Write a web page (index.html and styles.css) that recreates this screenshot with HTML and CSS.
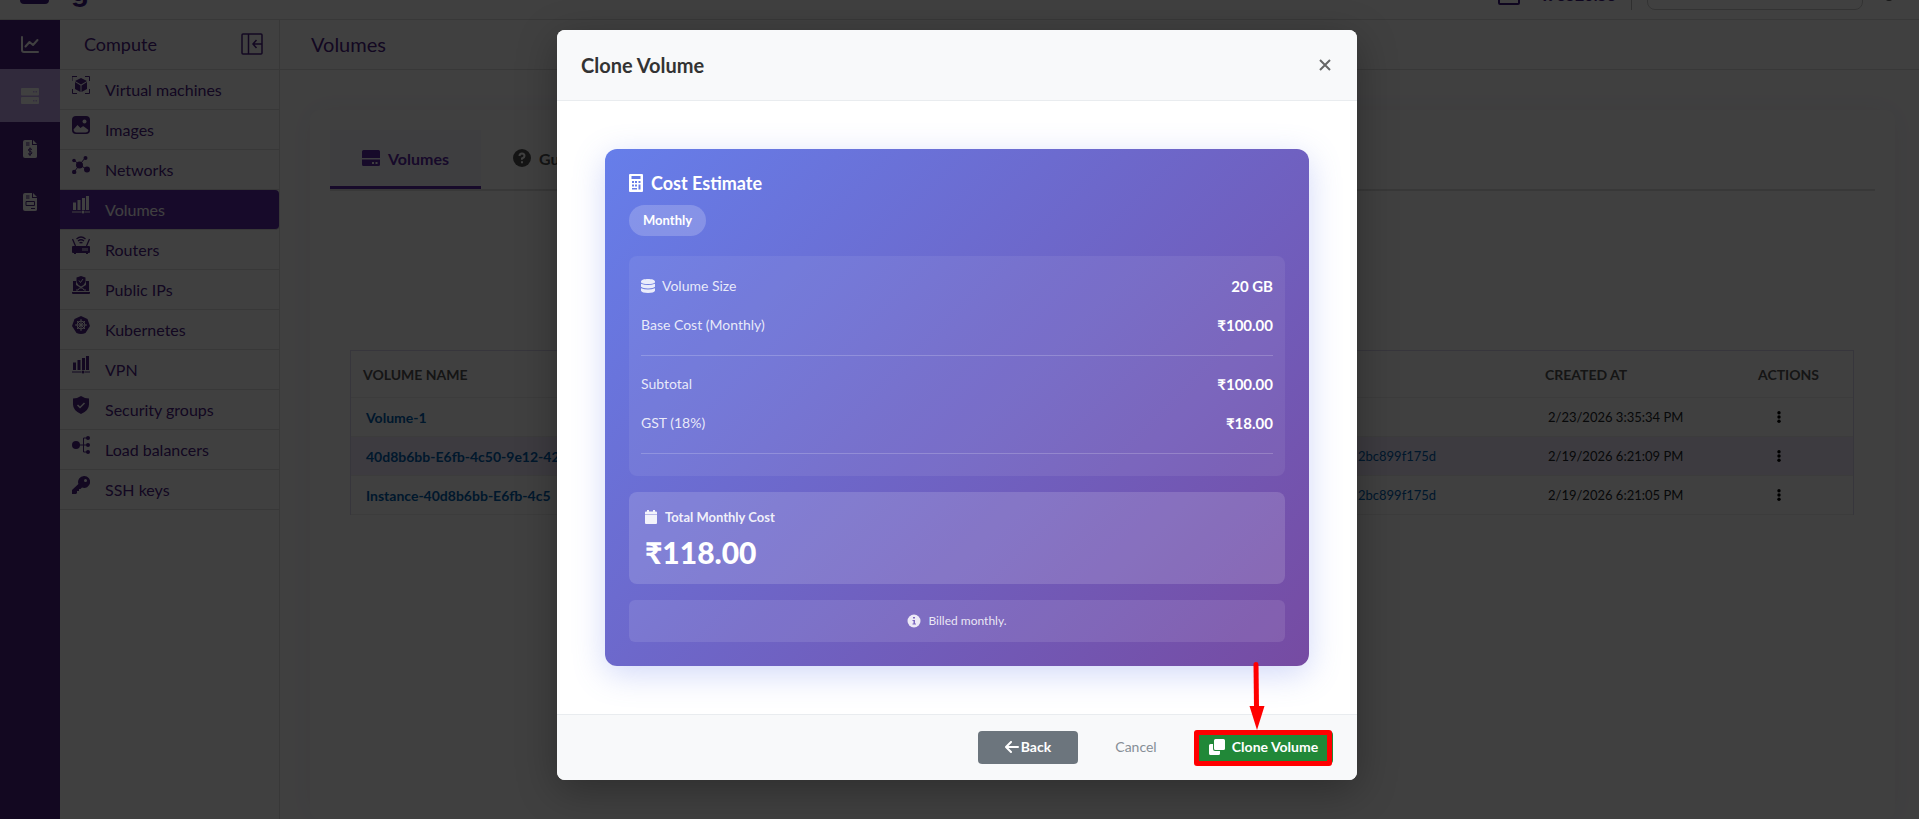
FILE: index.html
```html
<!DOCTYPE html>
<html lang="en">
<head>
    <meta charset="UTF-8">
    <meta name="viewport" content="width=device-width, initial-scale=1.0">
    <title>Clone Volume</title>
    <link rel="stylesheet" href="styles.css">
</head>
<body>
    <!-- Top bar, scrolled almost out of view -->
    <header class="topbar">
        <span class="brand-mark"></span>
        <span class="brand-text">g</span>
        <div class="topbar-right">
            <span class="wallet-box"></span>
            <span class="balance">₹96520.56</span>
            <span class="topbar-divider"></span>
            <span class="search-box"></span>
            <span class="user-dot"></span>
        </div>
    </header>

    <div class="layout">
        <nav class="rail" aria-label="Main">
            <a class="rail-item" href="#" aria-label="Dashboard">
                <svg width="18" height="18" viewBox="0 0 18 18" fill="none" stroke="#fff" stroke-width="2" stroke-linecap="round" stroke-linejoin="round"><path d="M1 1v13q0 2 2 2h14M4.500 10.500l4-4.500 3.500 3 4.500-5"/></svg>
            </a>
            <a class="rail-item rail-active" href="#" aria-label="Compute">
                <svg width="18" height="18" viewBox="0 0 18 18" fill="#fff"><rect y="1" width="18" height="7.500" rx="1"/><rect y="10" width="18" height="7" rx="1"/><path fill="#cdb4fa" d="M12 4h1.500v1.500H12zM14.500 4H16v1.500h-1.500zM12 13h1.500v1.500H12zM14.500 13H16v1.500h-1.500z"/></svg>
            </a>
            <a class="rail-item" href="#" aria-label="Billing">
                <svg width="14" height="18" viewBox="0 0 14 18"><path fill="#fff" d="M2 0h7v5h5v11.500q0 1.500-2 1.500H2q-2 0-2-2V2q0-2 2-2zM10 0l4 4h-4z"/><path d="M3 3h3.500M3 5h3.500M9 9.500Q7 8 5.500 9.500c-1 2 3.500 1.500 3.500 3.500-1 2-3 1.500-4 .5M7 7.500V16" fill="none" stroke="#4a2285"/></svg>
            </a>
            <a class="rail-item" href="#" aria-label="Invoices">
                <svg width="14" height="18" viewBox="0 0 14 18"><path fill="#fff" d="M2 0h7v5h5v11.500q0 1.500-2 1.500H2q-2 0-2-2V2q0-2 2-2zM10 0l4 4h-4z"/><path d="M3 3h3.500M3 5h3.500M3 8.500h8.500v4H3zM8 15.500h4" fill="none" stroke="#4a2285"/></svg>
            </a>
        </nav>

        <aside class="sidebar">
            <div class="sidebar-head">
                <span>Compute</span>
                <button class="collapse-btn" type="button" aria-label="Collapse menu">
                    <svg width="22" height="22" viewBox="0 0 22 22" fill="none" stroke="currentColor" stroke-width="1.500"><rect x="1" y="1" width="20" height="20" rx="1"/><path d="M7.500 1v20M21 11h-9M15.500 7L12 11l3.500 4"/></svg>
                </button>
            </div>
            <ul class="menu">
                <li><a class="menu-item" href="#"><svg width="18" height="18" viewBox="0 0 18 18"><path d="M0 5V.5h5M13 .5h4.500V5M17.500 13v4.500H13M5 17.500H.5V13" fill="none" stroke="currentColor"/><path fill="currentColor" d="M9 2l6 3-6 3.500L3 5zM3 6l5.500 3.500V16L3 13zM15 6L9.500 9.500V16l5.500-3z"/></svg>Virtual machines</a></li>
                <li><a class="menu-item" href="#"><svg width="18" height="18" viewBox="0 0 18 18"><rect width="18" height="18" rx="4" fill="currentColor"/><circle cx="12.500" cy="5.500" r="2" fill="#fff"/><path fill="#fff" d="M1.500 13.500l4-4.500 3 3 2-1.500q1-.5 2 .5l4 3q-.5 2.500-3 2.500h-9q-2.500 0-3-3z"/></svg>Images</a></li>
                <li><a class="menu-item" href="#"><svg width="18" height="18" viewBox="0 0 18 18" fill="currentColor"><path d="M2 4l5.500 5L13 2M8 9l7 4.500M7.500 9L2 16" fill="none" stroke="currentColor"/><circle cx="7.500" cy="9" r="3.500"/><circle cx="2" cy="4.500" r="1.800"/><circle cx="13.500" cy="2" r="2"/><circle cx="15" cy="13.500" r="3"/><circle cx="2.200" cy="16" r="2.200"/></svg>Networks</a></li>
                <li><a class="menu-item menu-active" href="#"><svg width="18" height="18" viewBox="0 0 18 18" fill="currentColor"><path d="M1 6.500h3V14H1zM5.500 4h3v10h-3zM10 2h3v12h-3zM14 0h3v14h-3zM0 15.500h9v1H0zM13 15.500h5v1h-5z"/><circle cx="11" cy="16" r="1.500"/></svg>Volumes</a></li>
                <li><a class="menu-item" href="#"><svg width="18" height="18" viewBox="0 0 18 18"><path fill="currentColor" d="M1 10h16q1 0 1 1v5q0 1-1 1h-1v1h-2v-1H4v1H2v-1H1q-1 0-1-1v-5q0-1 1-1z"/><path d="M3.500 10L.5 3M14.500 10l3-7M4.500 3q4.500-4 9 0M6 5q3-2.500 6 0M7.500 7q1.500-1 3 0" fill="none" stroke="currentColor" stroke-width="1.300"/><path d="M11 12v3M13 12v3M15 12v3" stroke="#fff"/></svg>Routers</a></li>
                <li><a class="menu-item" href="#"><svg width="18" height="18" viewBox="0 0 18 18"><path fill="currentColor" d="M1 5h3v4l5 3 5-3V5h3v10H1zM0 16h18v1q0 1-1 1H1q-1 0-1-1zM9 0l4.500 1.500V6Q12 9.500 9 10.500 6 9.500 4.500 6V1.500z"/><path d="M7 4.500l1.500 2L11 3M4 14h2l1.500-2h3l1.500 2h2" fill="none" stroke="#fff"/></svg>Public IPs</a></li>
                <li><a class="menu-item" href="#"><svg width="18" height="18" viewBox="0 0 18 18"><path fill="currentColor" d="M9 0l6.500 3L18 10l-4.500 7q-4.500 2-9 0L0 10l2.500-7z"/><g fill="none" stroke="#fff"><circle cx="9" cy="9" r="4"/><circle cx="9" cy="9" r="1"/><path d="M9 3v12M3 9h12M5 5l8 8M13 5l-8 8"/></g></svg>Kubernetes</a></li>
                <li><a class="menu-item" href="#"><svg width="18" height="18" viewBox="0 0 18 18" fill="currentColor"><path d="M1 6.500h3V14H1zM5.500 4h3v10h-3zM10 2h3v12h-3zM14 0h3v14h-3zM0 15.500h9v1H0zM13 15.500h5v1h-5z"/><circle cx="11" cy="16" r="1.500"/></svg>VPN</a></li>
                <li><a class="menu-item" href="#"><svg width="18" height="18" viewBox="0 0 18 18"><path fill="currentColor" d="M9 0q4 2.500 8 2.500v6q0 6-8 9.500Q1 14.500 1 8.500v-6Q5 2.500 9 0z"/><path d="M5.500 9l2.500 2.500 4.500-4.500" fill="none" stroke="#fff" stroke-width="1.500"/></svg>Security groups</a></li>
                <li><a class="menu-item" href="#"><svg width="18" height="18" viewBox="0 0 18 18" fill="currentColor"><path d="M7 9h9M15 2h-3.500v14H15" fill="none" stroke="currentColor"/><circle cx="4" cy="9" r="4"/><circle cx="16" cy="2" r="2"/><circle cx="16" cy="9" r="2"/><circle cx="16" cy="16" r="2"/></svg>Load balancers</a></li>
                <li><a class="menu-item" href="#"><svg width="18" height="18" viewBox="0 0 18 18"><path fill="currentColor" fill-rule="evenodd" d="M12 0a6 6 0 1 1-2 11.600L8.500 13H7v2H5v2l-1 1H0v-4l6.400-6A6 6 0 0 1 12 0zm1.500 3a1.500 1.500 0 1 0 0 3 1.500 1.500 0 0 0 0-3z"/></svg>SSH keys</a></li>
            </ul>
        </aside>

        <main class="content">
            <h1 class="page-title">Volumes</h1>
            <div class="panel">
                <div class="tabs">
                    <button class="tab tab-active" type="button"><svg width="18" height="18" viewBox="0 0 18 18" fill="currentColor"><path d="M1.500 1h15Q18 1 18 2.500V9H0V2.500Q0 1 1.500 1zM0 10.500h18v5q0 1.500-1.500 1.500h-15Q0 17 0 15.500z"/><path fill="#fff" d="M10 13h2v2h-2zM13.500 13h2v2h-2z"/></svg>Volumes</button>
                    <button class="tab" type="button"><svg width="18" height="18" viewBox="0 0 18 18"><circle cx="9" cy="9" r="9" fill="currentColor"/><path d="M6.500 7q0-2.500 2.500-2.500T11.500 7Q11.500 8.500 9 9.500v1.200M9 12.300v2" fill="none" stroke="#fff" stroke-width="2"/></svg>Guide</button>
                </div>
                <div class="table-wrap">
                    <table class="volumes">
                        <thead>
                            <tr><th>VOLUME NAME</th><th></th><th>CREATED AT</th><th>ACTIONS</th></tr>
                        </thead>
                        <tbody>
                            <tr>
                                <td><a class="name" href="#">Volume-1</a></td>
                                <td></td>
                                <td>2/23/2026 3:35:34 PM</td>
                                <td><button class="dots" type="button" aria-label="Actions"><svg width="4" height="12" viewBox="0 0 4 12"><circle cx="2" cy="1.700" r="1.700"/><circle cx="2" cy="6" r="1.700"/><circle cx="2" cy="10.300" r="1.700"/></svg></button></td>
                            </tr>
                            <tr>
                                <td><a class="name" href="#">40d8b6bb-E6fb-4c50-9e12-42</a></td>
                                <td><a href="#">2bc899f175d</a></td>
                                <td>2/19/2026 6:21:09 PM</td>
                                <td><button class="dots" type="button" aria-label="Actions"><svg width="4" height="12" viewBox="0 0 4 12"><circle cx="2" cy="1.700" r="1.700"/><circle cx="2" cy="6" r="1.700"/><circle cx="2" cy="10.300" r="1.700"/></svg></button></td>
                            </tr>
                            <tr>
                                <td><a class="name" href="#">Instance-40d8b6bb-E6fb-4c5</a></td>
                                <td><a href="#">2bc899f175d</a></td>
                                <td>2/19/2026 6:21:05 PM</td>
                                <td><button class="dots" type="button" aria-label="Actions"><svg width="4" height="12" viewBox="0 0 4 12"><circle cx="2" cy="1.700" r="1.700"/><circle cx="2" cy="6" r="1.700"/><circle cx="2" cy="10.300" r="1.700"/></svg></button></td>
                            </tr>
                        </tbody>
                    </table>
                </div>
            </div>
        </main>
    </div>

    <!-- Clone dialog -->
    <div class="overlay">
        <div class="modal" role="dialog" aria-labelledby="modalTitle">
            <div class="modal-header">
                <h2 id="modalTitle">Clone Volume</h2>
                <button class="close-btn" type="button" aria-label="Close">
                    <svg width="12" height="12" viewBox="0 0 12 12" stroke="currentColor" stroke-width="2"><path d="M1 1l10 10M11 1L1 11"/></svg>
                </button>
            </div>
            <div class="modal-body">
                <section class="estimate">
                    <h3><svg width="14" height="18" viewBox="0 0 14 18"><path fill="#fff" fill-rule="evenodd" d="M1 0h12q1 0 1 1v16q0 1-1 1H1q-1 0-1-1V1q0-1 1-1zm1.500 2v3h9V2zM3 7v2h2V7zm3 0v2h2V7zm3.500 0v2h2V7zM3 10.500v2h2v-2zm3 0v2h2v-2zm3.500 0v5h2v-5zM3 14v1.500h5V14z"/></svg>Cost Estimate</h3>
                    <span class="badge">Monthly</span>
                    <div class="costs">
                        <div class="cost-row"><span class="cost-label"><svg width="14" height="14" viewBox="0 0 14 14" fill="currentColor"><path d="M0 2.500C0-.8 14-.8 14 2.500v1Q12 5 7 5T0 3.500zM0 4.800q7 2.400 14 0v3q-2 1.700-7 1.700T0 7.800zM0 9.200q7 2.400 14 0v2.600q-1 2.200-7 2.200t-7-2.200z"/></svg>Volume Size</span><strong>20 GB</strong></div>
                        <div class="cost-row"><span class="cost-label">Base Cost (Monthly)</span><strong>₹100.00</strong></div>
                        <hr>
                        <div class="cost-row"><span class="cost-label">Subtotal</span><strong>₹100.00</strong></div>
                        <div class="cost-row"><span class="cost-label">GST (18%)</span><strong>₹18.00</strong></div>
                        <hr>
                    </div>
                    <div class="total">
                        <div class="total-label"><svg width="12" height="14" viewBox="0 0 12 14" fill="currentColor"><path d="M2 0h2v1.500h4V0h2v1.500h1q1 0 1 1V4H0V2.500q0-1 1-1h1zM0 4.500h12V13q0 1-1 1H1q-1 0-1-1z"/></svg>Total Monthly Cost</div>
                        <div class="total-value">₹118.00</div>
                    </div>
                    <div class="note"><svg width="14" height="14" viewBox="0 0 14 14"><circle cx="7" cy="7" r="6.500" fill="currentColor"/><path d="M6 3h2v1.500H6zM5.500 6H8v3.500h1v1H5.500v-1h1V7h-1z" fill="#7c68bf"/></svg>Billed monthly.</div>
                </section>
            </div>
            <div class="modal-footer">
                <button class="btn btn-back" type="button"><svg width="14" height="12" viewBox="0 0 14 12" fill="none" stroke="#fff" stroke-width="2" stroke-linecap="round" stroke-linejoin="round"><path d="M13 6H1.500M6 1L1 6l5 5"/></svg>Back</button>
                <button class="btn btn-cancel" type="button">Cancel</button>
                <div class="clone-wrap">
                    <button class="btn btn-clone" type="button"><svg width="16" height="16" viewBox="0 0 16 16" fill="#fff"><path d="M6.500 0h8Q16 0 16 1.500v8q0 1.500-1.500 1.500h-8Q5 11 5 9.500v-8Q5 0 6.500 0zM1.500 5H4v5q0 2 2 2h5v2.500q0 1.500-1.500 1.500h-8Q0 16 0 14.500v-8Q0 5 1.500 5z"/></svg>Clone Volume</button>
                    <span class="marker"></span>
                    <svg class="arrow" width="16" height="70" viewBox="0 0 16 70"><path d="M7 3.500L7.500 46" stroke="#f00" stroke-width="5" stroke-linecap="round"/><path d="M.5 45h15L8 69z" fill="#f00"/></svg>
                </div>
            </div>
        </div>
    </div>
</body>
</html>
```

FILE: styles.css
```css
* {
    box-sizing: border-box;
}

body {
    margin: 0;
    height: 100vh;
    overflow: hidden;
    display: flex;
    flex-direction: column;
    font-family: Lato, "Noto Sans", sans-serif;
    font-size: 16px;
    color: #212529;
    background: #fff;
}

button {
    font-family: inherit;
    border: none;
    background: none;
    cursor: pointer;
}

a {
    text-decoration: none;
}

svg {
    flex-shrink: 0;
}

/* Top bar */
.topbar {
    height: 20px;
    flex-shrink: 0;
    display: flex;
    align-items: flex-end;
    padding: 0 52px 0 20px;
    border-bottom: 1px solid #ddd;
    overflow: hidden;
}

.brand-mark {
    width: 29px;
    height: 20px;
    margin-bottom: 15px;
    border-radius: 4px;
    background: #3e1a80;
}

.brand-text {
    margin-left: 22px;
    margin-bottom: 13px;
    font-family: Inter, sans-serif;
    font-size: 28px;
    line-height: 30px;
    font-weight: 700;
    color: #3e1a80;
}

.topbar-right {
    margin-left: auto;
    display: flex;
    align-items: flex-end;
}

.wallet-box {
    width: 22px;
    height: 20px;
    margin-bottom: 14px;
    border: 2px solid #3e1a80;
    border-radius: 2px;
}

.balance {
    margin-left: 18px;
    margin-bottom: 14px;
    font-weight: 700;
    line-height: 20px;
    color: #3e1a80;
}

.topbar-divider {
    width: 1px;
    height: 20px;
    margin: 0 15px 9px 15px;
    background: #bbb;
}

.search-box {
    width: 216px;
    height: 40px;
    margin-bottom: 9px;
    border: 1px solid #ccc;
    border-radius: 8px;
}

.user-dot {
    width: 8px;
    height: 8px;
    margin: 0 -26px 18px 22px;
    border-radius: 4px;
    background: #555;
}

.layout {
    flex: 1;
    display: flex;
    min-height: 0;
}

/* Icon rail */
.rail {
    width: 60px;
    flex-shrink: 0;
    background: #4e2285;
}

.rail-item {
    height: 53px;
    display: flex;
    align-items: center;
    justify-content: center;
}

.rail-item:first-child {
    height: 49px;
}

.rail-active {
    background: #c4a8f0;
}

/* Side menu */
.sidebar {
    width: 220px;
    flex-shrink: 0;
    border-right: 1px solid #ddd;
    color: #4b2085;
}

.sidebar-head {
    height: 50px;
    display: flex;
    align-items: center;
    justify-content: space-between;
    padding: 0 16px 2px 24px;
    border-bottom: 1px solid #ddd;
    font-size: 18px;
}

.collapse-btn {
    padding: 0;
    display: flex;
    color: inherit;
}

.menu {
    list-style: none;
    margin: 0;
    padding: 0;
}

.menu-item {
    height: 40px;
    display: flex;
    gap: 15px;
    padding: 6px 12px;
    border-bottom: 1px solid #ddd;
    font-size: 16px;
    line-height: 28px;
    color: #4b2085;
}

.menu-active {
    background: #5c28a8;
    color: #fff;
    border-radius: 0 4px 4px 0;
}

/* Page */
.content {
    flex: 1;
    display: flex;
    flex-direction: column;
    min-width: 0;
}

.page-title {
    margin: 0;
    height: 50px;
    flex-shrink: 0;
    padding: 0 31px;
    border-bottom: 1px solid #ddd;
    font-size: 20px;
    line-height: 48px;
    font-weight: 400;
    color: #4b2085;
}

.panel {
    flex: 1;
    margin: 40px 24px 0 30px;
    padding: 20px 20px 0;
    border-radius: 10px;
    box-shadow: 0 0 30px rgba(90, 40, 170, 0.08);
}

.tabs {
    display: flex;
    border-bottom: 2px solid #ddd;
}

.tab {
    height: 59px;
    display: flex;
    align-items: center;
    gap: 8px;
    padding: 0 32px;
    border-bottom: 3px solid transparent;
    font-size: 16px;
    font-weight: 700;
    color: #555;
}

.tab-active {
    background: #f8f7ff;
    border-bottom-color: #5c28a8;
    color: #5c28a8;
}

.table-wrap {
    margin: 159px 21px 0 20px;
}

.volumes {
    width: 100%;
    table-layout: fixed;
    border-collapse: separate;
    border-spacing: 0;
    border: 1px solid #dcd6ee;
    border-bottom: none;
    font-size: 13px;
}

.volumes th {
    height: 47px;
    padding: 0 12px;
    text-align: left;
    font-size: 14px;
    font-weight: 700;
    color: #555;
    border-bottom: 1px solid #eee;
}

.volumes td {
    height: 39px;
    padding: 0 15px;
    white-space: nowrap;
    overflow: hidden;
    border-bottom: 1px solid #eee;
}

.volumes th:nth-child(1) {
    width: 992px;
}

.volumes th:nth-child(2) {
    width: 190px;
}

.volumes th:nth-child(4) {
    width: 107px;
}

.volumes tr:nth-child(even) td {
    background: #f3ecff;
}

.volumes a {
    color: #0060b0;
}

.volumes .name {
    font-size: 14px;
    font-weight: 700;
}

.dots {
    display: flex;
    padding: 0 16px;
}

/* Dialog */
.overlay {
    position: absolute;
    inset: 0;
    display: flex;
    justify-content: center;
    align-items: flex-start;
    padding: 30px 5px 0 0;
    background: rgba(0, 0, 0, 0.75);
}

.modal {
    width: 800px;
    max-width: 90%;
    border-radius: 8px;
    background: #fff;
    box-shadow: 0 10px 40px rgba(0, 0, 0, 0.3);
}

.modal-header {
    display: flex;
    align-items: center;
    justify-content: space-between;
    padding: 24px;
    border-bottom: 1px solid #e9ecef;
    border-radius: 8px 8px 0 0;
    background: #f8f9fa;
}

.modal-header h2 {
    margin: 0;
    font-size: 20px;
    line-height: 22px;
    font-weight: 700;
    color: #333;
}

.close-btn {
    display: flex;
    padding: 2px;
    color: #666;
}

.modal-body {
    padding: 48px;
}

.estimate {
    padding: 24px;
    border-radius: 12px;
    background: linear-gradient(135deg, #667eea 0%, #764ba2 100%);
    box-shadow: 0 8px 32px rgba(102, 126, 234, 0.3);
    color: #fff;
}

.estimate h3 {
    display: flex;
    align-items: center;
    gap: 8px;
    margin: 0 0 12px;
    font-size: 18px;
    line-height: 20px;
    font-weight: 700;
}

.badge {
    display: inline-block;
    padding: 6px 14px;
    border-radius: 20px;
    background: rgba(255, 255, 255, 0.2);
    font-size: 13px;
    line-height: 19px;
    font-weight: 700;
    vertical-align: top;
}

.costs {
    margin: 20px 0 16px;
    padding: 10px 12px 14px;
    border-radius: 8px;
    background: rgba(255, 255, 255, 0.07);
}

.cost-row {
    display: flex;
    align-items: center;
    justify-content: space-between;
    height: 39px;
    font-size: 15px;
}

.cost-label {
    display: flex;
    align-items: center;
    gap: 7px;
    font-size: 14px;
    color: rgba(255, 255, 255, 0.85);
}

.costs hr {
    margin: 11px 0 8px;
    border: none;
    border-top: 1px solid rgba(255, 255, 255, 0.2);
}

.total {
    padding: 16px 16px 14px;
    border-radius: 8px;
    background: rgba(255, 255, 255, 0.15);
}

.total-label {
    display: flex;
    align-items: center;
    gap: 8px;
    font-size: 13px;
    line-height: 18px;
    font-weight: 700;
    color: rgba(255, 255, 255, 0.9);
}

.total-value {
    margin-top: 8px;
    font-size: 30px;
    line-height: 36px;
    font-weight: 900;
}

.note {
    display: flex;
    align-items: center;
    justify-content: center;
    gap: 7px;
    margin-top: 16px;
    padding: 12px;
    border-radius: 6px;
    background: rgba(255, 255, 255, 0.1);
    font-size: 12px;
    line-height: 18px;
    color: rgba(255, 255, 255, 0.85);
}

.modal-footer {
    display: flex;
    align-items: center;
    justify-content: flex-end;
    padding: 16px 24px;
    border-top: 1px solid #e9ecef;
    border-radius: 0 0 8px 8px;
    background: #f8f9fa;
}

.btn {
    height: 33px;
    display: flex;
    align-items: center;
    justify-content: center;
    border-radius: 4px;
    padding: 0 16px 2px;
    font-size: 14px;
}

.btn-back {
    width: 100px;
    gap: 2px;
    background: #6c757d;
    color: #fff;
    font-weight: 700;
}

.btn-cancel {
    width: 116px;
    color: #868e96;
}

.clone-wrap {
    position: relative;
}

.btn-clone {
    gap: 7px;
    width: 139px;
    padding: 0 0 2px;
    background: #218838;
    color: #fff;
    font-weight: 700;
}

/* Red callout drawn over the button */
.marker {
    position: absolute;
    inset: -1px 1px -2px 0;
    border: 5px solid #f00;
    border-radius: 3px;
    pointer-events: none;
}

.arrow {
    position: absolute;
    left: 55px;
    bottom: 100%;
}
```
